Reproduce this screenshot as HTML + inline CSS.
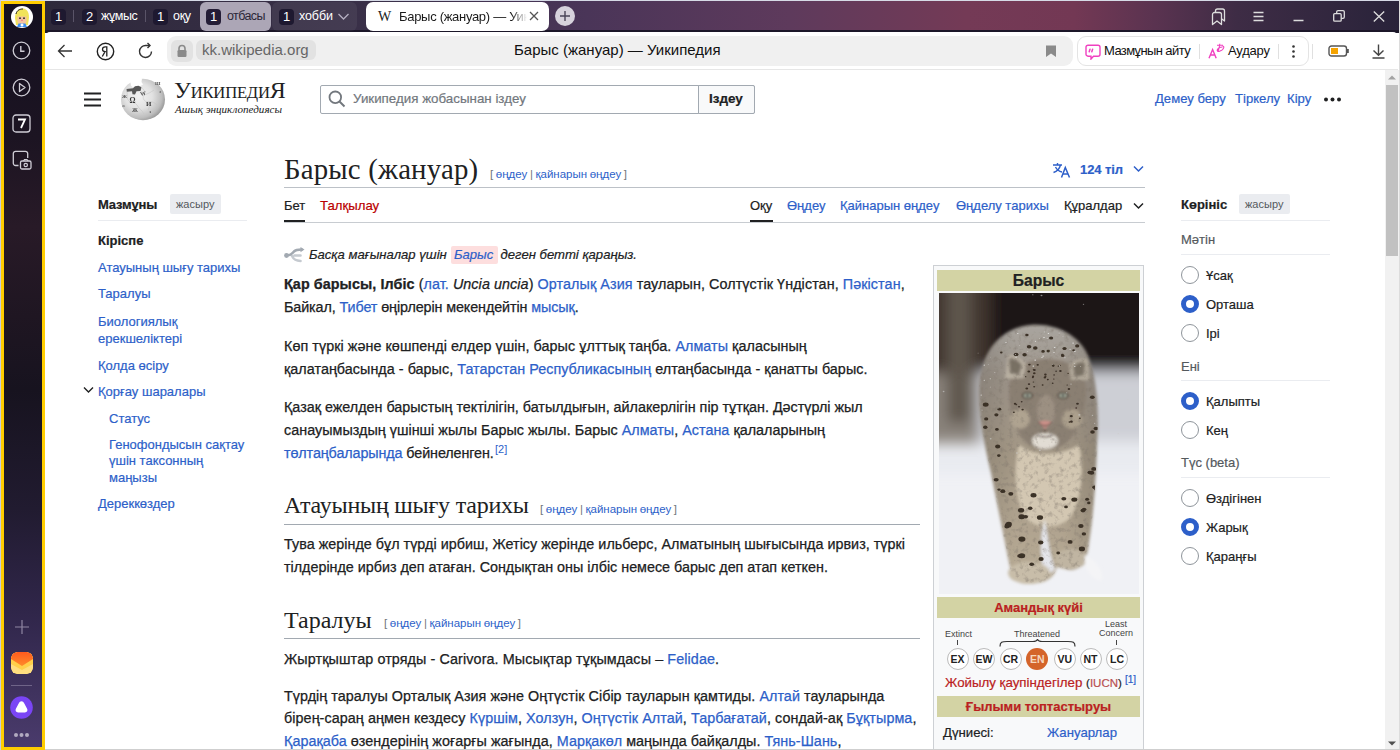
<!DOCTYPE html>
<html><head><meta charset="utf-8">
<style>
*{box-sizing:border-box}
html,body{margin:0;padding:0;width:1400px;height:750px;overflow:hidden;background:#fff;font-family:"Liberation Sans",sans-serif}
.a{position:absolute}
#frameT{left:0;top:0;width:1400px;height:1px;background:#d6dae6}
#frameL{left:0;top:0;width:1px;height:750px;background:#c8cde0}
#frameR{left:1399px;top:0;width:1px;height:750px;background:#dcdcdc}
#frameB{left:45px;top:749px;width:1355px;height:1px;background:#cfcfcf}
#side{left:1px;top:1px;width:44px;height:749px;border:3px solid #ffcd00;background:linear-gradient(180deg,#141020 0%,#1c1422 18%,#281a27 30%,#1f1622 42%,#17131f 52%,#211b30 68%,#30264a 82%,#4a3b6c 100%)}
#strip{left:45px;top:1px;width:1354px;height:32px;background:linear-gradient(90deg,#2e293b 0%,#3a3049 25%,#4a3558 40%,#5e3a5c 55%,#743a56 68%,#733854 76%,#5a3350 82%,#3e2c45 88%,#29233a 100%)}
#stripline{left:45px;top:30px;width:1354px;height:3px;background:#1c1729}
#toolbar{left:45px;top:32px;width:1353px;height:38px;background:#fff;border-radius:5px 5px 0 0;border-bottom:1px solid #e6e6e6}
.badge{position:absolute;top:9px;width:15px;height:16px;border-radius:4px;background:#1e1930;color:#fff;font-size:13px;line-height:16px;text-align:center}
.tabtxt{position:absolute;top:8px;color:#fff;font-size:13px;line-height:17px}
.sep{position:absolute;top:10px;width:1px;height:12px;background:#5a5468}

.w{position:absolute;color:#202122;white-space:nowrap;-webkit-text-stroke:0.2px currentColor}
.hl{-webkit-text-stroke:0}
.l{color:#2d5fc9}
.p{position:absolute;left:284px;font-size:14.35px;line-height:23px;color:#202122;white-space:nowrap;-webkit-text-stroke:0.25px currentColor}
.hl{font-family:"Liberation Serif",serif;font-weight:normal}
.ed{font-size:11.5px;color:#72777d;word-spacing:-0.6px;-webkit-text-stroke:0 !important}
.ed .l{color:#2d5fc9}
.toc{position:absolute;left:98px;font-size:13px;line-height:16px;color:#2d5fc9;white-space:nowrap;-webkit-text-stroke:0.2px currentColor}
.rad{position:absolute;left:1181px;width:18px;height:18px;border-radius:50%;border:1px solid #8f959b;background:#fff}
.rad.on{border:5px solid #2d5fc9}
.rl{position:absolute;left:1206px;font-size:13px;line-height:16px;color:#202122;white-space:nowrap;-webkit-text-stroke:0.2px currentColor}
.rh{position:absolute;left:1181px;font-size:13px;line-height:16px;color:#54595d;white-space:nowrap;-webkit-text-stroke:0.2px currentColor}
.rline{position:absolute;left:1181px;width:149px;height:1px;background:#eaecf0}
</style></head>
<body>
<div id="frameT" class="a"></div>
<div id="frameL" class="a"></div>
<div id="frameR" class="a"></div>
<div id="strip" class="a"></div>
<div id="stripline" class="a"></div>

<!-- tabstrip content -->
<div class="badge" style="left:51px">1</div>
<div class="sep" style="left:73px"></div>
<div class="badge" style="left:82px">2</div>
<div class="tabtxt" style="left:101px;letter-spacing:-0.4px;font-size:12.5px">жұмыс</div>
<div class="sep" style="left:145px"></div>
<div class="badge" style="left:153px">1</div>
<div class="tabtxt" style="left:173px;font-size:12.5px;letter-spacing:-0.3px">оқу</div>
<div class="a" style="left:200px;top:2px;width:71px;height:29px;border-radius:6px;background:#aca6b6"></div>
<div class="badge" style="left:206px;background:#241d36">1</div>
<div class="tabtxt" style="left:227px;color:#2b2638;font-size:12.5px;letter-spacing:-0.6px">отбасы</div>
<div class="a" style="left:272px;top:2px;width:85px;height:29px;border-radius:6px;background:rgba(255,255,255,0.06)"></div>
<div class="badge" style="left:279px">1</div>
<div class="tabtxt" style="left:299px;font-size:12.5px;letter-spacing:-0.1px">хобби</div>
<svg class="a" style="left:337px;top:12px" width="13" height="9" viewBox="0 0 13 9"><path d="M1.5 2 L6.5 7 L11.5 2" fill="none" stroke="#b4aec0" stroke-width="1.3"/></svg>
<div class="a" style="left:366px;top:2px;width:183px;height:29px;border-radius:7px;background:#fff"></div>
<div class="a" style="left:378px;top:8px;font-family:'Liberation Serif',serif;font-size:14px;line-height:17px;color:#222">W</div>
<div class="a" style="left:399px;top:8px;width:128px;overflow:hidden;white-space:nowrap;font-size:13px;line-height:17px;letter-spacing:-0.3px;color:#1a1a1a;-webkit-mask-image:linear-gradient(90deg,#000 88%,transparent 100%)">Барыс (жануар) — Уикипедия</div>
<svg class="a" style="left:529px;top:11px" width="10" height="10" viewBox="0 0 10 10"><path d="M1 1L9 9M9 1L1 9" stroke="#555" stroke-width="1.3"/></svg>
<div class="a" style="left:555px;top:6px;width:20px;height:20px;border-radius:50%;background:#d6d2dc"></div>
<svg class="a" style="left:558px;top:9px" width="14" height="14" viewBox="0 0 14 14"><path d="M7 2V12M2 7H12" stroke="#4a4558" stroke-width="1.4"/></svg>
<!-- window controls -->
<svg class="a" style="left:1210px;top:8px" width="16" height="18" viewBox="0 0 16 18"><path d="M2.5 16.5V6.5a2 2 0 0 1 2-2h5a2 2 0 0 1 2 2v10l-4.5-3.5z" fill="none" stroke="#ddd" stroke-width="1.3" stroke-linejoin="round"/><path d="M5.5 4.5V3a2 2 0 0 1 2-2h5a2 2 0 0 1 2 2v10l-3-2.3" fill="none" stroke="#ddd" stroke-width="1.3" stroke-linejoin="round"/></svg>
<svg class="a" style="left:1253px;top:11px" width="11" height="11" viewBox="0 0 11 11"><path d="M0.5 1.5H10.5M0.5 5.5H10.5M0.5 9.5H10.5" stroke="#ddd" stroke-width="1.4"/></svg>
<svg class="a" style="left:1293px;top:19px" width="11" height="3" viewBox="0 0 11 3"><path d="M0.5 1.5H10.5" stroke="#ddd" stroke-width="1.5"/></svg>
<svg class="a" style="left:1333px;top:10px" width="12" height="12" viewBox="0 0 12 12"><rect x="0.7" y="3.7" width="7.5" height="7.5" rx="1" fill="none" stroke="#ddd" stroke-width="1.3"/><path d="M3.7 3.5V2a1.3 1.3 0 0 1 1.3-1.3H10a1.3 1.3 0 0 1 1.3 1.3v5a1.3 1.3 0 0 1-1.3 1.3H8.3" fill="none" stroke="#ddd" stroke-width="1.3"/></svg>
<svg class="a" style="left:1373px;top:11px" width="12" height="11" viewBox="0 0 12 11"><path d="M0.8 0.5L11.2 10.5M11.2 0.5L0.8 10.5" stroke="#ddd" stroke-width="1.3"/></svg>
<div id="side" class="a"></div>
<div id="toolbar" class="a"></div>
<!-- sidebar icons -->
<svg class="a" style="left:10px;top:5px" width="24" height="24" viewBox="0 0 24 24">
<circle cx="12" cy="12" r="11" fill="#fff"/>
<path d="M5 13C5 6 9 3.5 12.5 3.5S19 6 19 12.5L18 20H6z" fill="#f1e35a"/>
<path d="M7.5 11.5h9v4.5a4.5 4 0 0 1-9 0z" fill="#f4c4a0"/>
<circle cx="10" cy="13.2" r="0.9" fill="#222"/><circle cx="14" cy="13.2" r="0.9" fill="#222"/>
<circle cx="12" cy="15.3" r="0.8" fill="#ee6a8a"/>
<path d="M6 9C7 5 10 4 13 4" fill="none" stroke="#222" stroke-width="1"/>
<path d="M8.5 18.5h7l1.5 3.5H7z" fill="#3a8ef0"/>
<circle cx="12" cy="20" r="1.5" fill="#fff"/>
</svg>
<svg class="a" style="left:12px;top:41px" width="19" height="19" viewBox="0 0 19 19"><circle cx="9.5" cy="9.5" r="8.3" fill="none" stroke="#cfcdd6" stroke-width="1.3"/><path d="M8.8 5V10.2H12.5" fill="none" stroke="#cfcdd6" stroke-width="1.4"/></svg>
<svg class="a" style="left:12px;top:78px" width="19" height="19" viewBox="0 0 19 19"><circle cx="9.5" cy="9.5" r="8.3" fill="none" stroke="#cfcdd6" stroke-width="1.3"/><path d="M7.5 5.5L13 9.5L7.5 13.5z" fill="none" stroke="#cfcdd6" stroke-width="1.3" stroke-linejoin="round"/></svg>
<svg class="a" style="left:12px;top:114px" width="19" height="19" viewBox="0 0 19 19"><rect x="1" y="1" width="17" height="17" rx="3" fill="none" stroke="#cfcdd6" stroke-width="1.3"/><path d="M6 5.5H13L9 14" fill="none" stroke="#fff" stroke-width="1.8"/></svg>
<svg class="a" style="left:12px;top:150px" width="20" height="20" viewBox="0 0 20 20"><path d="M6.5 15.5H3.5a2.2 2.2 0 0 1-2.2-2.2V3.5a2.2 2.2 0 0 1 2.2-2.2h10a2.2 2.2 0 0 1 2.2 2.2V8" fill="none" stroke="#cfcdd6" stroke-width="1.3"/><rect x="8.5" y="11" width="10.5" height="8" rx="1.5" fill="none" stroke="#cfcdd6" stroke-width="1.3"/><path d="M11.5 11l1-1.5h2.5l1 1.5" fill="none" stroke="#cfcdd6" stroke-width="1.2"/><circle cx="13.75" cy="15" r="1.7" fill="none" stroke="#cfcdd6" stroke-width="1.2"/></svg>
<svg class="a" style="left:14px;top:619px" width="16" height="16" viewBox="0 0 16 16"><path d="M8 1V15M1 8H15" stroke="#8f86a2" stroke-width="1.2"/></svg>
<svg class="a" style="left:11px;top:652px;border-radius:6px;overflow:hidden" width="22" height="22" viewBox="0 0 22 22"><defs><clipPath id="mc"><rect width="22" height="22" rx="6"/></clipPath><linearGradient id="mt" x1="0" y1="0" x2="0" y2="1"><stop offset="0" stop-color="#ff5a1e"/><stop offset="1" stop-color="#ff8a2a"/></linearGradient></defs><g clip-path="url(#mc)"><rect x="0" y="0" width="22" height="22" rx="6" fill="#ffd45a"/><path d="M0 12V6a6 6 0 0 1 6-6h10a6 6 0 0 1 6 6v6L11 20z" fill="#ffcf4a"/><path d="M6 0h10a6 6 0 0 1 6 6v1L11 14L0 7V6a6 6 0 0 1 6-6z" fill="url(#mt)"/><path d="M0 22V12L11 18L22 12V22z" fill="#ffe08a" opacity="0.8"/></g></svg>
<div class="a" style="left:11px;top:685px;width:21px;height:1px;background:#6f6488"></div>
<svg class="a" style="left:10px;top:696px" width="23" height="23" viewBox="0 0 23 23"><circle cx="11.5" cy="11.5" r="11.3" fill="#7a45f5"/><path d="M11.5 5.3c1.2 0 2 .8 2.8 2.2l2.8 5.2c.9 1.8 0 3.6-2.2 3.8c-1.2.1-2.2-.1-3.4-.1s-2.2.2-3.4.1c-2.2-.2-3.1-2-2.2-3.8l2.8-5.2c.8-1.4 1.6-2.2 2.8-2.2z" fill="#fff"/></svg>
<svg class="a" style="left:13px;top:732px" width="17" height="6" viewBox="0 0 17 6"><circle cx="3" cy="3" r="2" fill="#b1aac0"/><circle cx="8.5" cy="3" r="2" fill="#b1aac0"/><circle cx="14" cy="3" r="2" fill="#b1aac0"/></svg>


<!-- toolbar content -->
<svg class="a" style="left:57px;top:44px" width="16" height="14" viewBox="0 0 16 14"><path d="M15 7H1.5M7.5 1L1.5 7L7.5 13" fill="none" stroke="#333" stroke-width="1.3"/></svg>
<svg class="a" style="left:96px;top:42px" width="19" height="19" viewBox="0 0 19 19"><circle cx="9.5" cy="9.5" r="8.2" fill="none" stroke="#222" stroke-width="1.4"/><path d="M10.8 14.5V4.8H9.2C7.3 4.8 6.5 5.9 6.5 7.2c0 1.4.8 2.3 2.6 2.4L6.3 14.5" fill="none" stroke="#222" stroke-width="1.3"/></svg>
<svg class="a" style="left:137px;top:42px" width="18" height="18" viewBox="0 0 18 18"><path d="M14.5 9.5A6 6 0 1 1 9 3.5H12.5" fill="none" stroke="#333" stroke-width="1.4"/><path d="M10.5 1L13 3.5L10.5 6" fill="none" stroke="#333" stroke-width="1.4"/></svg>
<div class="a" style="left:167px;top:36px;width:906px;height:30px;border-radius:9px;background:#f0f0f0"></div>
<div class="a" style="left:171px;top:40px;width:22px;height:22px;border-radius:6px;background:#e2e2e2"></div>
<svg class="a" style="left:176px;top:44px" width="12" height="14" viewBox="0 0 12 14"><path d="M3 6V4.5a3 3 0 0 1 6 0V6" fill="none" stroke="#8a8a8a" stroke-width="1.6"/><rect x="1.5" y="6" width="9" height="7" rx="1.2" fill="#8a8a8a"/></svg>
<div class="a" style="left:196px;top:40px;width:120px;height:20px;border-radius:6px;background:#e2e2e2"></div>
<div class="a" style="left:202px;top:41px;font-size:15px;line-height:18px;color:#666">kk.wikipedia.org</div>
<div class="a" style="left:514px;top:41px;font-size:15px;line-height:18px;color:#111">Барыс (жануар) — Уикипедия</div>
<svg class="a" style="left:1045px;top:44px" width="12" height="14" viewBox="0 0 12 14"><path d="M1 1.5h10V13L6 9.5L1 13z" fill="#8a8a8a"/></svg>
<div class="a" style="left:1077px;top:36px;width:232px;height:30px;border-radius:9px;background:#fff;border:1px solid #e4e4e4"></div>
<svg class="a" style="left:1085px;top:44px" width="16" height="16" viewBox="0 0 16 16"><path d="M3 1.2h10a2 2 0 0 1 2 2v7a2 2 0 0 1-2 2H8.5L6 15v-2.8H3a2 2 0 0 1-2-2v-7a2 2 0 0 1 2-2z" fill="none" stroke="#f040c0" stroke-width="1.4"/><path d="M5 5.2l-.8 2.6M7.6 5.2l-.8 2.6" stroke="#f040c0" stroke-width="1.5" stroke-linecap="round"/></svg>
<div class="a" style="left:1104px;top:42px;font-size:13px;line-height:17px;color:#111;letter-spacing:-0.6px">Мазмұнын айту</div>
<div class="a" style="left:1199px;top:44px;width:1px;height:15px;background:#e0e0e0"></div>
<svg class="a" style="left:1208px;top:43px" width="17" height="16" viewBox="0 0 17 16"><path d="M1 15.3L4.6 6.5L8.2 15.3M2.4 12H6.8" fill="none" stroke="#f040c0" stroke-width="1.4"/><path d="M9 2.2H15M11.8 0.8C11.5 4 11 6.5 10 8.5M14.5 4C13 4 10.2 4.8 9.3 6.8C8.8 8 10 8.8 11.5 8.3C13.5 7.6 15.5 6 15.8 4.5C16 3.5 15.3 3 14.5 3" fill="none" stroke="#f040c0" stroke-width="1.1"/></svg>
<div class="a" style="left:1228px;top:42px;font-size:13px;line-height:17px;color:#111;letter-spacing:-0.2px">Аудару</div>
<div class="a" style="left:1278px;top:44px;width:1px;height:15px;background:#e0e0e0"></div>
<svg class="a" style="left:1291px;top:45px" width="5" height="13" viewBox="0 0 5 13"><circle cx="2.5" cy="1.5" r="1.3" fill="#333"/><circle cx="2.5" cy="6.5" r="1.3" fill="#333"/><circle cx="2.5" cy="11.5" r="1.3" fill="#333"/></svg>
<div class="a" style="left:1312px;top:44px;width:1px;height:15px;background:#e0e0e0"></div>
<svg class="a" style="left:1328px;top:45px" width="22" height="12" viewBox="0 0 22 12"><rect x="1" y="1" width="17.5" height="10" rx="2.5" fill="none" stroke="#555" stroke-width="1.4"/><rect x="3" y="3" width="7" height="6" fill="#f5a300"/><rect x="19" y="4" width="1.8" height="4" fill="#555"/></svg>
<svg class="a" style="left:1372px;top:44px" width="13" height="15" viewBox="0 0 13 15"><path d="M6.5 0.5V11M1.5 6.5L6.5 11.3L11.5 6.5M0.5 14H12.5" fill="none" stroke="#444" stroke-width="1.4"/></svg>

<!-- wiki header -->
<svg class="a" style="left:84px;top:92px" width="17" height="15" viewBox="0 0 17 15"><path d="M0 1.5H17M0 7.5H17M0 13.5H17" stroke="#202122" stroke-width="2"/></svg>
<svg class="a" style="left:120px;top:78px" width="46" height="43" viewBox="0 0 46 43">
<defs><radialGradient id="gl" cx="0.4" cy="0.42" r="0.62"><stop offset="0" stop-color="#f2f2f2"/><stop offset="0.5" stop-color="#e2e2e2"/><stop offset="0.85" stop-color="#bdbdbd"/><stop offset="1" stop-color="#9a9a9a"/></radialGradient>
<filter id="gb"><feGaussianBlur stdDeviation="0.35"/></filter></defs>
<ellipse cx="23" cy="21.5" rx="22" ry="20.7" fill="url(#gl)"/>
<path d="M10 2.5C13 1 17 0.5 22 0.6L21.5 4L23 6.5L20 8.2L17 8.5L13 9.5L11 7.5z" fill="#fff"/>
<g filter="url(#gb)">
<path d="M6.5 11L13 10.2L15 8.3L18.5 7.8L21.5 9.3L20.5 13L16.5 13.2L15 16.5L12.5 16.3L12 13.3L6.8 13.8z" fill="#585858"/>
<path d="M21.5 9.3C24 12 26 14 24 17C22 20 24 23 27 24C30 25 30 29 28 32M6.8 13.8C8 17 6 20 9 23C12 25 15 24 17 27M24 17C28 16 31 14 34 12M27 24C31 23 34 24 37 27M17 27C19 31 22 32 24 36" fill="none" stroke="#c4c4c4" stroke-width="0.6"/>
<text x="9.5" y="24.5" font-size="7.5" font-family="Liberation Serif" font-weight="bold" fill="#3a3a3a">Ω</text>
<text x="20" y="17.5" font-size="6" font-family="Liberation Serif" font-weight="bold" fill="#555" transform="rotate(-12 23 15)">W</text>
<text x="26" y="27.5" font-size="7" font-family="Liberation Serif" font-weight="bold" fill="#3a3a3a">И</text>
<text x="12" y="33.5" font-size="6" font-family="Liberation Serif" font-weight="bold" fill="#4a4a4a">Ж</text>
<text x="29" y="35" font-size="5" font-family="Liberation Serif" font-weight="bold" fill="#555">э</text>
<text x="35" y="6.5" font-size="5" font-family="Liberation Serif" font-weight="bold" fill="#555">Ш</text>
<text x="39" y="15" font-size="5" font-family="Liberation Serif" font-weight="bold" fill="#666">з</text>
<text x="2" y="20" font-size="5" font-family="Liberation Serif" font-weight="bold" fill="#555">Ж</text>
<text x="2" y="29" font-size="4.5" font-family="Liberation Serif" fill="#666">ж</text>
</g>
</svg>
<div class="w" style="-webkit-text-stroke:0;left:174px;top:76px;font-family:'Liberation Serif',serif;font-size:24px;line-height:28px;color:#202122;letter-spacing:-0.3px"><span>У</span><span style="font-size:16.6px;letter-spacing:-0.2px">ИКИПЕДИ</span><span>Я</span></div>
<div class="w" style="-webkit-text-stroke:0;left:175px;top:102px;font-family:'Liberation Serif',serif;font-style:italic;font-size:11.1px;line-height:14px;color:#202122">Ашық энциклопедиясы</div>
<div class="a" style="left:320px;top:85px;width:435px;height:29px;border:1px solid #a2a9b1;border-radius:2px;background:#fff"></div>
<div class="a" style="left:698px;top:85px;width:57px;height:29px;border:1px solid #a2a9b1;border-radius:0 2px 2px 0;background:#f8f9fa"></div>
<div class="w" style="left:709px;top:91px;font-size:13.5px;line-height:16px;font-weight:bold;color:#202122">Іздеу</div>
<svg class="a" style="left:328px;top:90px" width="18" height="18" viewBox="0 0 18 18"><circle cx="7.3" cy="7.3" r="5.8" fill="none" stroke="#72777d" stroke-width="1.8"/><path d="M11.5 11.5L16.5 16.5" stroke="#72777d" stroke-width="1.9"/></svg>
<div class="w" style="left:353px;top:91px;font-size:13.35px;line-height:16px;color:#72777d">Уикипедия жобасынан іздеу</div>
<div class="w l" style="left:1155px;top:91px;font-size:13.1px;line-height:16px">Демеу беру</div>
<div class="w l" style="left:1235px;top:91px;font-size:13.1px;line-height:16px">Тіркелу</div>
<div class="w l" style="left:1287px;top:91px;font-size:13.1px;line-height:16px">Кіру</div>
<svg class="a" style="left:1323px;top:96px" width="19" height="7" viewBox="0 0 19 7"><circle cx="3" cy="3.5" r="2" fill="#202122"/><circle cx="9.5" cy="3.5" r="2" fill="#202122"/><circle cx="16" cy="3.5" r="2" fill="#202122"/></svg>

<!-- title -->
<div class="w hl" style="left:284px;top:152px;font-size:28.8px;line-height:34px;letter-spacing:0.2px">Барыс (жануар)</div>
<div class="w ed" style="left:490px;top:167px;line-height:14px">[ <span class="l">өңдеу</span> | <span class="l">қайнарын өңдеу</span> ]</div>
<div class="a" style="left:284px;top:187px;width:861px;height:1px;background:#bcc1c7"></div>
<svg class="a" style="left:1052px;top:162px" width="19" height="16" viewBox="0 0 19 16"><path d="M1 3H10M5.5 1V3M8.5 3C7.5 7 4.5 9.5 1.5 10.5M3.5 5C5 8 7.5 9.5 10 10" fill="none" stroke="#2d5fc9" stroke-width="1.4"/><path d="M9.5 15.5L13.3 5.5L17.5 15.5M11 12H16" fill="none" stroke="#2d5fc9" stroke-width="1.5"/></svg>
<div class="w" style="left:1080px;top:162px;font-size:13px;line-height:16px;font-weight:bold;color:#2d5fc9;letter-spacing:-0.1px">124 тіл</div>
<svg class="a" style="left:1133px;top:165px" width="11" height="8" viewBox="0 0 11 8"><path d="M1 1.5L5.5 6L10 1.5" fill="none" stroke="#2d5fc9" stroke-width="1.5"/></svg>

<!-- tabs -->
<div class="w" style="left:284px;top:198px;font-size:13px;line-height:16px;color:#202122">Бет</div>
<div class="w" style="left:320px;top:198px;font-size:13.2px;line-height:16px;color:#ba0000">Талқылау</div>
<div class="w" style="left:750px;top:198px;font-size:13px;line-height:16px;color:#202122">Оқу</div>
<div class="w l" style="left:787px;top:198px;font-size:13px;line-height:16px">Өңдеу</div>
<div class="w l" style="left:840px;top:198px;font-size:13px;line-height:16px">Қайнарын өңдеу</div>
<div class="w l" style="left:956px;top:198px;font-size:13px;line-height:16px">Өңделу тарихы</div>
<div class="w" style="left:1064px;top:198px;font-size:13px;line-height:16px;color:#202122">Құралдар</div>
<svg class="a" style="left:1133px;top:202px" width="11" height="8" viewBox="0 0 11 8"><path d="M1 1.5L5.5 6L10 1.5" fill="none" stroke="#202122" stroke-width="1.5"/></svg>
<div class="a" style="left:284px;top:222px;width:861px;height:1px;background:#c8ccd1"></div>
<div class="a" style="left:284px;top:220px;width:21px;height:2px;background:#202122"></div>
<div class="a" style="left:750px;top:220px;width:23px;height:2px;background:#202122"></div>

<!-- TOC -->
<div class="w" style="left:98px;top:197px;font-size:13px;line-height:16px;font-weight:bold;color:#202122;letter-spacing:-0.15px">Мазмұны</div>
<div class="a" style="left:170px;top:194px;width:51px;height:20px;border-radius:2px;background:#eaecf0"></div>
<div class="w" style="-webkit-text-stroke:0;left:176px;top:197px;font-size:11px;line-height:14px;color:#54595d">жасыру</div>
<div class="a" style="left:98px;top:220px;width:149px;height:1px;background:#eaecf0"></div>
<div class="toc" style="top:232.5px;font-weight:bold;color:#202122">Кіріспе</div>
<div class="toc" style="top:259.5px">Атауының шығу тарихы</div>
<div class="toc" style="top:285.5px">Таралуы</div>
<div class="toc" style="top:314px;line-height:16.5px">Биологиялық<br>ерекшеліктері</div>
<div class="toc" style="top:357.5px">Қолда өсіру</div>
<svg class="a" style="left:83px;top:386px" width="11" height="8" viewBox="0 0 11 8"><path d="M1 1.5L5.5 6L10 1.5" fill="none" stroke="#202122" stroke-width="1.4"/></svg>
<div class="toc" style="top:384px">Қорғау шаралары</div>
<div class="toc" style="left:109px;top:410.5px">Статус</div>
<div class="toc" style="left:109px;top:437px;line-height:16.4px">Генофондысын сақтау<br>үшін таксонның<br>маңызы</div>
<div class="toc" style="top:495.5px">Дереккөздер</div>

<!-- hatnote -->
<svg class="a" style="left:280px;top:244px" width="30" height="22" viewBox="0 0 30 22"><path d="M14.5 11.5H20.5M12 12C14 16 16 17 20.5 17" fill="none" stroke="#c5cad0" stroke-width="2.6" stroke-linecap="round"/><path d="M6.5 11.5C10 11.5 12 10 14 7.5C16 5.5 18 5.5 21.5 5.5" fill="none" stroke="#a2a9b1" stroke-width="2.6" stroke-linecap="round"/><circle cx="6.5" cy="11.5" r="2.4" fill="#a2a9b1"/><path d="M20.5 3L24.5 5.6L20.5 8.2z" fill="#a2a9b1"/></svg>
<div class="a" style="left:451px;top:246px;width:47px;height:18px;border-radius:2px;background:#fddede"></div>
<div class="w" style="left:309px;top:247px;font-size:13.1px;line-height:16px;font-style:italic;color:#202122">Басқа мағыналар үшін&nbsp; <span class="l">Барыс</span>&nbsp; деген бетті қараңыз.</div>

<!-- paragraphs -->
<div class="p" style="top:273px"><span id="p1a" style="letter-spacing:0.077px"><b>Қар барысы, Ілбіс</b> (<span class="l">лат.</span> <i>Uncia uncia</i>) <span class="l">Орталық Азия</span> тауларын, Солтүстік Үндістан, <span class="l">Пәкістан</span>,</span></div>
<div class="p" style="top:296px"><span id="p1b" style="letter-spacing:-0.098px">Байкал, <span class="l">Тибет</span> өңірлерін мекендейтін <span class="l">мысық</span>.</span></div>
<div class="p" style="top:334.6px"><span id="p2a" style="letter-spacing:0.055px">Көп түркі және көшпенді елдер үшін, барыс ұлттық таңба. <span class="l">Алматы</span> қаласының</span></div>
<div class="p" style="top:357.6px"><span id="p2b" style="letter-spacing:0.040px">қалатаңбасында - барыс, <span class="l">Татарстан Республикасының</span> елтаңбасында - қанатты барыс.</span></div>
<div class="p" style="top:396.3px"><span id="p3a" style="letter-spacing:-0.008px">Қазақ ежелден барыстың тектілігін, батылдығын, айлакерлігін пір тұтқан. Дәстүрлі жыл</span></div>
<div class="p" style="top:419.3px"><span id="p3b" style="letter-spacing:0.024px">санауымыздың үшінші жылы Барыс жылы. Барыс <span class="l">Алматы</span>, <span class="l">Астана</span> қалаларының</span></div>
<div class="p" style="top:442.3px"><span id="p3c" style="letter-spacing:-0.101px"><span class="l">төлтаңбаларында</span> бейнеленген.</span></div>
<div class="w l" style="-webkit-text-stroke:0;left:495px;top:443px;font-size:11px;line-height:12px">[2]</div>

<div class="w hl" style="left:284px;top:491px;font-size:24px;line-height:28px;letter-spacing:-0.22px">Атауының шығу тарихы</div>
<div class="w ed" style="left:540px;top:502px;line-height:14px">[ <span class="l">өңдеу</span> | <span class="l">қайнарын өңдеу</span> ]</div>
<div class="a" style="left:284px;top:524px;width:636px;height:1px;background:#a2a9b1"></div>
<div class="p" style="top:532.5px"><span id="p4a" style="letter-spacing:0.018px">Тува жерінде бұл түрді ирбиш, Жетісу жерінде ильберс, Алматының шығысында ирвиз, түркі</span></div>
<div class="p" style="top:555.5px"><span id="p4b" style="letter-spacing:-0.010px">тілдерінде ирбиз деп атаған. Сондықтан оны ілбіс немесе барыс деп атап кеткен.</span></div>

<div class="w hl" style="left:284px;top:606px;font-size:24px;line-height:28px">Таралуы</div>
<div class="w ed" style="left:384px;top:616px;line-height:14px">[ <span class="l">өңдеу</span> | <span class="l">қайнарын өңдеу</span> ]</div>
<div class="a" style="left:284px;top:638px;width:636px;height:1px;background:#a2a9b1"></div>
<div class="p" style="top:647.5px"><span id="p5a" style="letter-spacing:0.105px">Жыртқыштар отряды - Carivora. Мысықтар тұқымдасы – <span class="l">Felidae</span>.</span></div>
<div class="p" style="top:684.7px"><span id="p6a" style="letter-spacing:0.042px">Түрдің таралуы Орталық Азия және Оңтүстік Сібір тауларын қамтиды. <span class="l">Алтай</span> тауларында</span></div>
<div class="p" style="top:707.3px"><span id="p6b" style="letter-spacing:0.068px">бірең-сараң аңмен кездесу <span class="l">Күршім</span>, <span class="l">Холзун</span>, <span class="l">Оңтүстік Алтай</span>, <span class="l">Тарбағатай</span>, сондай-ақ <span class="l">Бұқтырма</span>,</span></div>
<div class="p" style="top:729.9px"><span id="p6c" style="letter-spacing:0.050px"><span class="l">Қарақаба</span> өзендерінің жоғарғы жағында, <span class="l">Марқакөл</span> маңында байқалды. <span class="l">Тянь-Шань</span>,</span></div>

<!-- infobox -->
<div class="a" style="left:933px;top:265px;width:211px;height:500px;border:1px solid #cdd0d4;background:#f8f9fa"></div>
<div class="a" style="left:937px;top:270px;width:203px;height:21px;background:#d3d3a4"></div>
<div class="w" style="left:937px;top:271px;width:203px;text-align:center;font-size:15.6px;line-height:19px;font-weight:bold;color:#202122">Барыс</div>
<svg class="a" style="left:939px;top:293px" width="200" height="301" viewBox="0 0 200 301">
<defs>
<filter id="bl" x="-30%" y="-30%" width="160%" height="160%"><feGaussianBlur stdDeviation="7"/></filter>
<filter id="bl2" x="-10%" y="-10%" width="120%" height="120%"><feGaussianBlur stdDeviation="1.8"/></filter>
<filter id="bl3"><feGaussianBlur stdDeviation="0.75"/></filter><filter id="bl4"><feGaussianBlur stdDeviation="0.9"/></filter>
<filter id="fur" x="0" y="0" width="100%" height="100%"><feTurbulence type="fractalNoise" baseFrequency="0.2" numOctaves="3" seed="5"/><feColorMatrix values="0 0 0 0 0.2  0 0 0 0 0.17  0 0 0 0 0.14  0 0 0 1.2 -0.6"/><feGaussianBlur stdDeviation="0.5"/><feComposite in2="SourceGraphic" operator="in"/></filter>
<clipPath id="bodyclip"><path d="M40 100C40 60 60 35 92 32C125 30 148 50 152 72C158 90 160 120 158 150C157 190 154 225 150 250C148 268 142 278 130 277L118 274C115 286 105 291 92 290C78 289 72 282 70 270C64 240 58 210 52 180C45 150 40 125 40 100z"/></clipPath>
<linearGradient id="bodyg" x1="0" y1="0" x2="0" y2="1"><stop offset="0" stop-color="#a9a59f"/><stop offset="0.2" stop-color="#9d948a"/><stop offset="0.5" stop-color="#a39785"/><stop offset="1" stop-color="#b9ac96"/></linearGradient>
<linearGradient id="sideg" x1="0" y1="0" x2="1" y2="0"><stop offset="0" stop-color="#000" stop-opacity="0.12"/><stop offset="0.3" stop-color="#000" stop-opacity="0"/><stop offset="0.7" stop-color="#000" stop-opacity="0"/><stop offset="1" stop-color="#000" stop-opacity="0.12"/></linearGradient>
</defs>
<rect width="200" height="301" fill="#e9ebf0"/>
<g filter="url(#bl)">
<rect x="-20" y="-20" width="240" height="98" fill="#1c1816"/>
<rect x="-20" y="-20" width="72" height="110" fill="#3f362f"/>
<rect x="-20" y="80" width="62" height="70" fill="#8a837c"/>
<rect x="8" y="-10" width="24" height="140" fill="#5e564e"/>
<rect x="40" y="78" width="180" height="70" fill="#cdcfd5"/>
<rect x="-20" y="180" width="240" height="140" fill="#f0f1f5"/>
</g>
<g filter="url(#bl2)">
<path d="M40 100C40 60 60 35 92 32C125 30 148 50 152 72C158 90 160 120 158 150C157 190 154 225 150 250C148 268 142 278 130 277L118 274C115 286 105 291 92 290C78 289 72 282 70 270C64 240 58 210 52 180C45 150 40 125 40 100z" fill="url(#bodyg)"/>
<path d="M40 100C40 60 60 35 92 32C125 30 148 50 152 72C158 90 160 120 158 150C157 190 154 225 150 250C148 268 142 278 130 277L118 274C115 286 105 291 92 290C78 289 72 282 70 270C64 240 58 210 52 180C45 150 40 125 40 100z" fill="url(#sideg)"/>
<path d="M70 95C70 75 88 66 108 66C128 66 146 75 147 95C148 118 140 140 125 152C115 158 100 158 90 152C76 142 69 118 70 95z" fill="#8a7f72"/>
<path d="M66 86L69 63Q76 59 87 71L85 85z" fill="#b9b0a2"/>
<path d="M150 87L149 67Q141 63 130 72L132 87z" fill="#b3aa9b"/>
<path d="M70 66Q76 64 83 72L80 82L71 80z" fill="#786f64"/>
<path d="M146 70Q140 67 134 74L136 84L145 82z" fill="#786f64"/>
<ellipse cx="81" cy="126" rx="10" ry="10" fill="#afa390"/>
<ellipse cx="133" cy="126" rx="10" ry="10" fill="#ab9f8c"/>
<ellipse cx="107" cy="118" rx="9" ry="16" fill="#9c9082"/>
<path d="M80 152C95 164 120 164 140 152C146 177 142 210 130 226C118 236 98 236 88 226C76 210 74 177 80 152z" fill="#d3c7b2"/>
<ellipse cx="106" cy="148" rx="13" ry="8" fill="#e2ddd4"/>
<path d="M106 226C109 248 112 265 116 276C111 282 106 282 104 276C101 260 101 242 106 226z" fill="#e4e5ea"/>
<ellipse cx="90" cy="280" rx="21" ry="11" fill="#c8bda9"/>
<ellipse cx="132" cy="266" rx="16" ry="10" fill="#c0b5a2"/>
<path d="M146 262C158 268 166 280 162 288C152 285 144 276 146 262z" fill="#f4f4f6"/>
</g>
<g clip-path="url(#bodyclip)"><rect width="200" height="301" fill="#fff" filter="url(#fur)"/></g>
<g clip-path="url(#bodyclip)"><g filter="url(#bl3)" fill="#3b3027">
<ellipse cx="105.9" cy="84.6" rx="1.3" ry="1.0"/><ellipse cx="106.5" cy="83.2" rx="1.1" ry="0.8"/><ellipse cx="94.1" cy="83.3" rx="1.1" ry="0.9"/><ellipse cx="120.9" cy="72.4" rx="0.9" ry="0.7"/><ellipse cx="90.0" cy="91.1" rx="1.2" ry="0.9"/><ellipse cx="87.8" cy="95.5" rx="1.4" ry="1.0"/><ellipse cx="114.8" cy="86.0" rx="0.8" ry="0.6"/><ellipse cx="86.7" cy="83.7" rx="0.7" ry="0.6"/><ellipse cx="94.4" cy="76.3" rx="0.7" ry="0.5"/><ellipse cx="106.4" cy="81.5" rx="1.3" ry="1.0"/><ellipse cx="108.8" cy="86.6" rx="1.0" ry="0.8"/><ellipse cx="115.1" cy="81.9" rx="0.9" ry="0.7"/><ellipse cx="129.9" cy="95.9" rx="1.3" ry="1.0"/><ellipse cx="117.1" cy="78.2" rx="0.9" ry="0.6"/><ellipse cx="98.7" cy="71.8" rx="1.2" ry="0.9"/><ellipse cx="103.6" cy="92.0" rx="1.0" ry="0.7"/><ellipse cx="128.2" cy="92.0" rx="0.7" ry="0.5"/><ellipse cx="95.2" cy="93.7" rx="1.0" ry="0.8"/><ellipse cx="129.1" cy="80.3" rx="0.8" ry="0.6"/><ellipse cx="113.7" cy="90.2" rx="0.9" ry="0.7"/><ellipse cx="89.8" cy="78.6" rx="1.4" ry="1.0"/><ellipse cx="119.4" cy="73.1" rx="0.9" ry="0.7"/><ellipse cx="90.4" cy="71.6" rx="1.3" ry="0.9"/><ellipse cx="93.8" cy="84.5" rx="1.0" ry="0.8"/><ellipse cx="94.4" cy="89.0" rx="0.8" ry="0.6"/><ellipse cx="114.3" cy="73.0" rx="1.0" ry="0.7"/><ellipse cx="95.4" cy="77.0" rx="1.4" ry="1.0"/><ellipse cx="121.4" cy="77.9" rx="1.3" ry="1.0"/><ellipse cx="95.3" cy="80.3" rx="1.3" ry="1.0"/><ellipse cx="114.2" cy="72.6" rx="1.4" ry="1.0"/><ellipse cx="76.1" cy="110.7" rx="1.3" ry="1.0"/><ellipse cx="77.3" cy="111.7" rx="0.9" ry="0.6"/><ellipse cx="74.9" cy="119.2" rx="1.0" ry="0.7"/><ellipse cx="80.0" cy="113.7" rx="1.1" ry="0.8"/><ellipse cx="83.6" cy="116.6" rx="1.2" ry="0.9"/><ellipse cx="82.7" cy="108.8" rx="0.9" ry="0.7"/><ellipse cx="140.9" cy="125.3" rx="1.0" ry="0.7"/><ellipse cx="132.3" cy="123.2" rx="1.5" ry="1.1"/><ellipse cx="132.4" cy="128.7" rx="1.4" ry="1.1"/><ellipse cx="137.2" cy="115.0" rx="0.9" ry="0.7"/><ellipse cx="130.5" cy="129.0" rx="1.0" ry="0.7"/><ellipse cx="138.5" cy="110.7" rx="1.4" ry="1.0"/><ellipse cx="57.9" cy="136.4" rx="1.8" ry="1.4"/><ellipse cx="60.4" cy="116.2" rx="1.9" ry="1.4"/><ellipse cx="57.2" cy="186.7" rx="2.5" ry="1.8"/><ellipse cx="51.6" cy="192.6" rx="1.9" ry="1.4"/><ellipse cx="46.3" cy="134.2" rx="2.2" ry="1.7"/><ellipse cx="47.2" cy="125.9" rx="2.1" ry="1.6"/><ellipse cx="57.4" cy="121.8" rx="2.1" ry="1.6"/><ellipse cx="63.8" cy="198.2" rx="2.5" ry="1.9"/><ellipse cx="59.8" cy="162.6" rx="1.8" ry="1.3"/><ellipse cx="46.7" cy="111.6" rx="2.9" ry="2.2"/><ellipse cx="60.0" cy="196.6" rx="1.6" ry="1.2"/><ellipse cx="58.7" cy="153.4" rx="2.6" ry="2.0"/><ellipse cx="149.8" cy="209.9" rx="1.7" ry="1.3"/><ellipse cx="152.6" cy="179.8" rx="2.7" ry="2.0"/><ellipse cx="154.8" cy="175.9" rx="2.6" ry="1.9"/><ellipse cx="157.0" cy="135.5" rx="2.4" ry="1.8"/><ellipse cx="156.8" cy="195.2" rx="2.1" ry="1.6"/><ellipse cx="155.5" cy="194.3" rx="2.3" ry="1.7"/><ellipse cx="153.5" cy="139.0" rx="2.3" ry="1.7"/><ellipse cx="153.3" cy="104.2" rx="2.4" ry="1.8"/><ellipse cx="157.9" cy="196.2" rx="2.5" ry="1.9"/><ellipse cx="150.7" cy="179.5" rx="2.3" ry="1.7"/><ellipse cx="80.3" cy="262.9" rx="2.1" ry="1.6"/><ellipse cx="94.5" cy="202.2" rx="3.0" ry="2.2"/><ellipse cx="82.1" cy="217.3" rx="3.1" ry="2.3"/><ellipse cx="82.9" cy="246.1" rx="3.5" ry="2.6"/><ellipse cx="71.8" cy="200.8" rx="2.5" ry="1.9"/><ellipse cx="91.2" cy="215.2" rx="2.3" ry="1.7"/><ellipse cx="101.7" cy="249.5" rx="2.7" ry="2.0"/><ellipse cx="101.0" cy="224.5" rx="3.1" ry="2.3"/><ellipse cx="69.1" cy="232.3" rx="3.3" ry="2.5"/><ellipse cx="102.1" cy="266.0" rx="2.6" ry="2.0"/><ellipse cx="86.8" cy="223.7" rx="2.2" ry="1.7"/><ellipse cx="82.8" cy="262.8" rx="3.4" ry="2.5"/><ellipse cx="92.7" cy="271.3" rx="2.4" ry="1.8"/><ellipse cx="67.8" cy="233.8" rx="2.4" ry="1.8"/><ellipse cx="69.8" cy="231.0" rx="3.0" ry="2.3"/><ellipse cx="82.7" cy="223.7" rx="3.3" ry="2.5"/><ellipse cx="155.3" cy="233.5" rx="1.9" ry="1.4"/><ellipse cx="119.2" cy="260.0" rx="1.9" ry="1.4"/><ellipse cx="144.9" cy="240.9" rx="2.2" ry="1.7"/><ellipse cx="148.1" cy="206.2" rx="2.0" ry="1.5"/><ellipse cx="135.3" cy="206.6" rx="3.0" ry="2.2"/><ellipse cx="127.0" cy="213.9" rx="1.9" ry="1.4"/><ellipse cx="141.9" cy="233.1" rx="2.7" ry="2.0"/><ellipse cx="142.9" cy="255.9" rx="3.1" ry="2.4"/><ellipse cx="144.0" cy="217.6" rx="2.5" ry="1.8"/><ellipse cx="124.8" cy="205.7" rx="2.5" ry="1.8"/><ellipse cx="145.1" cy="216.3" rx="2.2" ry="1.6"/><ellipse cx="131.1" cy="248.9" rx="2.5" ry="1.9"/><ellipse cx="109.2" cy="58.1" rx="1.7" ry="1.3"/><ellipse cx="123.4" cy="61.7" rx="1.3" ry="1.0"/><ellipse cx="134.6" cy="57.3" rx="1.4" ry="1.0"/><ellipse cx="96.3" cy="55.0" rx="2.3" ry="1.7"/><ellipse cx="90.1" cy="53.7" rx="2.3" ry="1.7"/><ellipse cx="123.7" cy="62.7" rx="1.8" ry="1.3"/><ellipse cx="112.1" cy="44.9" rx="2.1" ry="1.5"/><ellipse cx="125.5" cy="55.4" rx="2.1" ry="1.5"/><ellipse cx="77.1" cy="61.6" rx="2.4" ry="1.8"/><ellipse cx="138.2" cy="52.9" rx="2.1" ry="1.6"/><ellipse cx="85.6" cy="61.8" rx="2.2" ry="1.7"/><ellipse cx="87.9" cy="42.0" rx="1.7" ry="1.3"/><ellipse cx="104.0" cy="58.4" rx="1.8" ry="1.3"/><ellipse cx="62.3" cy="59.4" rx="1.3" ry="1.0"/>
<ellipse cx="131.0" cy="39.4" rx="0.6" ry="0.4" fill="#f2f2f2" opacity="0.8"/><ellipse cx="129.9" cy="38.0" rx="0.5" ry="0.4" fill="#f2f2f2" opacity="0.8"/><ellipse cx="104.1" cy="63.1" rx="0.8" ry="0.6" fill="#f2f2f2" opacity="0.8"/><ellipse cx="120.5" cy="72.7" rx="0.6" ry="0.5" fill="#f2f2f2" opacity="0.8"/><ellipse cx="145.2" cy="35.7" rx="0.5" ry="0.4" fill="#f2f2f2" opacity="0.8"/><ellipse cx="105.0" cy="44.5" rx="0.8" ry="0.6" fill="#f2f2f2" opacity="0.8"/><ellipse cx="115.7" cy="54.5" rx="0.8" ry="0.6" fill="#f2f2f2" opacity="0.8"/><ellipse cx="108.2" cy="45.4" rx="0.6" ry="0.4" fill="#f2f2f2" opacity="0.8"/><ellipse cx="135.3" cy="70.7" rx="0.5" ry="0.4" fill="#f2f2f2" opacity="0.8"/><ellipse cx="135.8" cy="73.6" rx="0.7" ry="0.5" fill="#f2f2f2" opacity="0.8"/><ellipse cx="109.4" cy="40.6" rx="0.7" ry="0.5" fill="#f2f2f2" opacity="0.8"/><ellipse cx="102.8" cy="58.0" rx="0.4" ry="0.3" fill="#f2f2f2" opacity="0.8"/><ellipse cx="147.1" cy="54.2" rx="0.6" ry="0.5" fill="#f2f2f2" opacity="0.8"/><ellipse cx="131.1" cy="56.2" rx="0.6" ry="0.5" fill="#f2f2f2" opacity="0.8"/><ellipse cx="120.6" cy="34.8" rx="0.7" ry="0.5" fill="#f2f2f2" opacity="0.8"/><ellipse cx="94.3" cy="73.1" rx="0.9" ry="0.6" fill="#f2f2f2" opacity="0.8"/><ellipse cx="80.6" cy="52.3" rx="0.5" ry="0.3" fill="#f2f2f2" opacity="0.8"/><ellipse cx="96.2" cy="67.1" rx="0.9" ry="0.6" fill="#f2f2f2" opacity="0.8"/><ellipse cx="100.3" cy="45.6" rx="0.5" ry="0.4" fill="#f2f2f2" opacity="0.8"/><ellipse cx="113.7" cy="71.8" rx="0.5" ry="0.3" fill="#f2f2f2" opacity="0.8"/><ellipse cx="129.0" cy="33.0" rx="0.5" ry="0.4" fill="#f2f2f2" opacity="0.8"/><ellipse cx="76.6" cy="61.5" rx="0.6" ry="0.4" fill="#f2f2f2" opacity="0.8"/><ellipse cx="88.8" cy="58.6" rx="0.5" ry="0.3" fill="#f2f2f2" opacity="0.8"/><ellipse cx="124.4" cy="37.3" rx="0.7" ry="0.5" fill="#f2f2f2" opacity="0.8"/><ellipse cx="78.8" cy="40.5" rx="0.7" ry="0.5" fill="#f2f2f2" opacity="0.8"/><ellipse cx="96.5" cy="48.2" rx="0.6" ry="0.5" fill="#f2f2f2" opacity="0.8"/><ellipse cx="105.3" cy="38.9" rx="0.5" ry="0.4" fill="#f2f2f2" opacity="0.8"/><ellipse cx="115.0" cy="59.5" rx="0.7" ry="0.5" fill="#f2f2f2" opacity="0.8"/><ellipse cx="135.9" cy="58.3" rx="0.8" ry="0.6" fill="#f2f2f2" opacity="0.8"/><ellipse cx="77.1" cy="63.9" rx="0.8" ry="0.6" fill="#f2f2f2" opacity="0.8"/><ellipse cx="140.8" cy="45.6" rx="0.6" ry="0.4" fill="#f2f2f2" opacity="0.8"/><ellipse cx="142.7" cy="41.4" rx="0.9" ry="0.7" fill="#f2f2f2" opacity="0.8"/><ellipse cx="139.3" cy="37.8" rx="0.5" ry="0.4" fill="#f2f2f2" opacity="0.8"/><ellipse cx="124.0" cy="43.2" rx="0.4" ry="0.3" fill="#f2f2f2" opacity="0.8"/><ellipse cx="134.1" cy="50.1" rx="0.8" ry="0.6" fill="#f2f2f2" opacity="0.8"/><ellipse cx="67.0" cy="49.3" rx="0.7" ry="0.6" fill="#f2f2f2" opacity="0.8"/><ellipse cx="56.7" cy="40.6" rx="0.7" ry="0.6" fill="#f2f2f2" opacity="0.8"/><ellipse cx="141.6" cy="73.6" rx="0.5" ry="0.3" fill="#f2f2f2" opacity="0.8"/><ellipse cx="103.0" cy="64.6" rx="0.7" ry="0.5" fill="#f2f2f2" opacity="0.8"/><ellipse cx="120.1" cy="40.1" rx="0.4" ry="0.3" fill="#f2f2f2" opacity="0.8"/><ellipse cx="43.9" cy="62.2" rx="0.6" ry="0.5" fill="#eee" opacity="0.7"/><ellipse cx="51.3" cy="94.1" rx="0.5" ry="0.3" fill="#eee" opacity="0.7"/><ellipse cx="45.3" cy="72.2" rx="0.7" ry="0.6" fill="#eee" opacity="0.7"/><ellipse cx="59.8" cy="115.6" rx="0.4" ry="0.3" fill="#eee" opacity="0.7"/><ellipse cx="43.1" cy="117.1" rx="0.6" ry="0.4" fill="#eee" opacity="0.7"/><ellipse cx="55.8" cy="79.6" rx="0.6" ry="0.4" fill="#eee" opacity="0.7"/><ellipse cx="51.3" cy="85.8" rx="0.6" ry="0.5" fill="#eee" opacity="0.7"/><ellipse cx="42.2" cy="102.1" rx="0.7" ry="0.6" fill="#eee" opacity="0.7"/><ellipse cx="45.3" cy="87.2" rx="0.7" ry="0.5" fill="#eee" opacity="0.7"/><ellipse cx="49.3" cy="71.7" rx="0.5" ry="0.3" fill="#eee" opacity="0.7"/>
<g filter="url(#bl4)"><ellipse cx="88.5" cy="102.5" rx="5.6" ry="3.8" fill="#5a5046"/><ellipse cx="124" cy="102.5" rx="5.6" ry="3.8" fill="#5a5046"/>
<ellipse cx="88.5" cy="102.5" rx="3.8" ry="2.3" fill="#9fa596"/><ellipse cx="124" cy="102.5" rx="3.8" ry="2.3" fill="#9fa596"/>
<ellipse cx="88.5" cy="102.5" rx="1" ry="1.6" fill="#333"/><ellipse cx="124" cy="102.5" rx="1" ry="1.6" fill="#333"/>
<path d="M99 129Q106 126 113 129L106 136z" fill="#c99088"/>
<path d="M99 129Q106 137 113 129M106 136V140M98 142Q106 146 114 142" stroke="#4b4037" stroke-width="0.9" fill="none"/></g>
</g></g>
<g filter="url(#bl3)"><ellipse cx="102.5" cy="2.5" rx="1.0" ry="0.8" fill="#cfcfcf" opacity="0.6"/><ellipse cx="160.3" cy="112.7" rx="1.0" ry="0.8" fill="#cfcfcf" opacity="0.6"/><ellipse cx="125.9" cy="64.7" rx="0.9" ry="0.6" fill="#cfcfcf" opacity="0.6"/><ellipse cx="100.9" cy="157.2" rx="1.0" ry="0.7" fill="#cfcfcf" opacity="0.6"/><ellipse cx="51.7" cy="145.8" rx="0.9" ry="0.7" fill="#cfcfcf" opacity="0.6"/><ellipse cx="155.6" cy="130.3" rx="0.7" ry="0.6" fill="#cfcfcf" opacity="0.6"/><ellipse cx="179.3" cy="140.8" rx="0.9" ry="0.7" fill="#cfcfcf" opacity="0.6"/><ellipse cx="153.5" cy="122.4" rx="0.7" ry="0.6" fill="#cfcfcf" opacity="0.6"/><ellipse cx="144.5" cy="11.3" rx="0.7" ry="0.5" fill="#cfcfcf" opacity="0.6"/><ellipse cx="93.8" cy="1.7" rx="0.7" ry="0.5" fill="#cfcfcf" opacity="0.6"/><ellipse cx="127.7" cy="99.8" rx="0.6" ry="0.5" fill="#cfcfcf" opacity="0.6"/><ellipse cx="188.9" cy="106.6" rx="0.7" ry="0.5" fill="#cfcfcf" opacity="0.6"/><ellipse cx="132.0" cy="91.1" rx="0.8" ry="0.6" fill="#cfcfcf" opacity="0.6"/><ellipse cx="77.9" cy="160.0" rx="0.9" ry="0.7" fill="#cfcfcf" opacity="0.6"/><ellipse cx="140.3" cy="121.9" rx="1.1" ry="0.8" fill="#cfcfcf" opacity="0.6"/><ellipse cx="4.6" cy="98.5" rx="0.9" ry="0.7" fill="#cfcfcf" opacity="0.6"/><ellipse cx="51.3" cy="64.2" rx="0.5" ry="0.4" fill="#cfcfcf" opacity="0.6"/><ellipse cx="39.1" cy="60.1" rx="0.6" ry="0.4" fill="#cfcfcf" opacity="0.6"/></g>
</svg>
<div class="a" style="left:937px;top:597px;width:203px;height:21px;background:#d3d3a4"></div>
<div class="w" style="left:937px;top:600px;width:203px;text-align:center;font-size:13px;line-height:16px;font-weight:bold;color:#ba2121">Амандық күйі</div>
<div class="w" style="-webkit-text-stroke:0;left:945px;top:629px;font-size:9px;line-height:10px;color:#444">Extinct</div>
<div class="w" style="-webkit-text-stroke:0;left:1014px;top:629px;font-size:9px;line-height:10px;color:#444">Threatened</div>
<div class="w" style="-webkit-text-stroke:0;left:1099px;top:620px;width:34px;text-align:center;font-size:9px;line-height:9px;color:#444">Least<br>Concern</div>
<div class="a" style="left:957px;top:640px;width:1px;height:5px;background:#444"></div>
<div class="a" style="left:1116px;top:640px;width:1px;height:5px;background:#444"></div>
<svg class="a" style="left:999px;top:639px" width="77" height="9" viewBox="0 0 77 9"><path d="M1 7.5C1 3 3 2.5 8 2.5H34C37 2.5 38 1.5 38.5 0.5C39 1.5 40 2.5 43 2.5H69C74 2.5 76 3 76 7.5" fill="none" stroke="#333" stroke-width="1.2"/></svg>
<div class="a" style="left:946.5px;top:647.5px;width:22px;height:22px;border-radius:50%;background:#fff;border:1px solid #bbb;color:#222;font-size:10.5px;font-weight:bold;line-height:20px;text-align:center">EX</div>
<div class="a" style="left:973.0px;top:647.5px;width:22px;height:22px;border-radius:50%;background:#fff;border:1px solid #bbb;color:#222;font-size:10.5px;font-weight:bold;line-height:20px;text-align:center">EW</div>
<div class="a" style="left:999.5px;top:647.5px;width:22px;height:22px;border-radius:50%;background:#fff;border:1px solid #bbb;color:#222;font-size:10.5px;font-weight:bold;line-height:20px;text-align:center">CR</div>
<div class="a" style="left:1026.2px;top:647.5px;width:22px;height:22px;border-radius:50%;background:#d4642a;color:#f6d7bf;font-size:10.5px;font-weight:bold;line-height:22px;text-align:center">EN</div>
<div class="a" style="left:1053.7px;top:647.5px;width:22px;height:22px;border-radius:50%;background:#fff;border:1px solid #bbb;color:#222;font-size:10.5px;font-weight:bold;line-height:20px;text-align:center">VU</div>
<div class="a" style="left:1079.5px;top:647.5px;width:22px;height:22px;border-radius:50%;background:#fff;border:1px solid #bbb;color:#222;font-size:10.5px;font-weight:bold;line-height:20px;text-align:center">NT</div>
<div class="a" style="left:1106.0px;top:647.5px;width:22px;height:22px;border-radius:50%;background:#fff;border:1px solid #bbb;color:#222;font-size:10.5px;font-weight:bold;line-height:20px;text-align:center">LC</div>

<div class="w" style="left:945px;top:675px;font-size:13.3px;line-height:16px;color:#ba2121">Жойылу қаупіндегілер <span style="font-size:11.5px;color:#202122">(<span style="color:#b85050">IUCN</span>)</span></div>
<div class="w l" style="left:1125px;top:674px;font-size:10px;line-height:12px">[1]</div>
<div class="a" style="left:937px;top:696px;width:203px;height:21px;background:#d3d3a4"></div>
<div class="w" style="left:937px;top:699px;width:203px;text-align:center;font-size:13px;line-height:16px;font-weight:bold;color:#ba2121">Ғылыми топтастыруы</div>
<div class="w" style="left:943px;top:725px;font-size:13.2px;line-height:16px;color:#202122">Дүниесі:</div>
<div class="w l" style="left:1047px;top:725px;font-size:13.2px;line-height:16px">Жануарлар</div>

<!-- right panel -->
<div class="w" style="left:1181px;top:197px;font-size:13px;line-height:16px;font-weight:bold;color:#202122">Көрініс</div>
<div class="a" style="left:1239px;top:194px;width:51px;height:20px;border-radius:2px;background:#eaecf0"></div>
<div class="w" style="-webkit-text-stroke:0;left:1245px;top:197px;font-size:11px;line-height:14px;color:#54595d">жасыру</div>
<div class="rline" style="top:220px"></div>
<div class="rh" style="top:232px">Мәтін</div>
<div class="rline" style="top:254px"></div>
<div class="rad" style="top:265.5px"></div><div class="rl" style="top:267.5px">Ұсақ</div>
<div class="rad on" style="top:294.5px"></div><div class="rl" style="top:296.5px">Орташа</div>
<div class="rad" style="top:323.5px"></div><div class="rl" style="top:325.5px">Ірі</div>
<div class="rh" style="top:358.5px">Ені</div>
<div class="rline" style="top:380px"></div>
<div class="rad on" style="top:392px"></div><div class="rl" style="top:393.5px">Қалыпты</div>
<div class="rad" style="top:421px"></div><div class="rl" style="top:422.5px">Кең</div>
<div class="rh" style="top:455px">Түс (beta)</div>
<div class="rline" style="top:477px"></div>
<div class="rad" style="top:489px"></div><div class="rl" style="top:490.5px">Өздігінен</div>
<div class="rad on" style="top:518px"></div><div class="rl" style="top:519.5px">Жарық</div>
<div class="rad" style="top:547px"></div><div class="rl" style="top:548.5px">Қараңғы</div>

<!-- scrollbar -->
<div class="a" style="left:1385px;top:70px;width:14px;height:679px;background:#f1f1f1"></div>
<div class="a" style="left:1386px;top:85px;width:12px;height:171px;background:#c1c1c1"></div>
<svg class="a" style="left:1386px;top:73px" width="12" height="9" viewBox="0 0 12 9"><path d="M2 6.5L6 2.5L10 6.5z" fill="#a3a3a3"/></svg>
<svg class="a" style="left:1386px;top:739px" width="12" height="9" viewBox="0 0 12 9"><path d="M2 2.5L6 6.5L10 2.5z" fill="#505050"/></svg>
<div id="frameB" class="a"></div>
</body></html>
